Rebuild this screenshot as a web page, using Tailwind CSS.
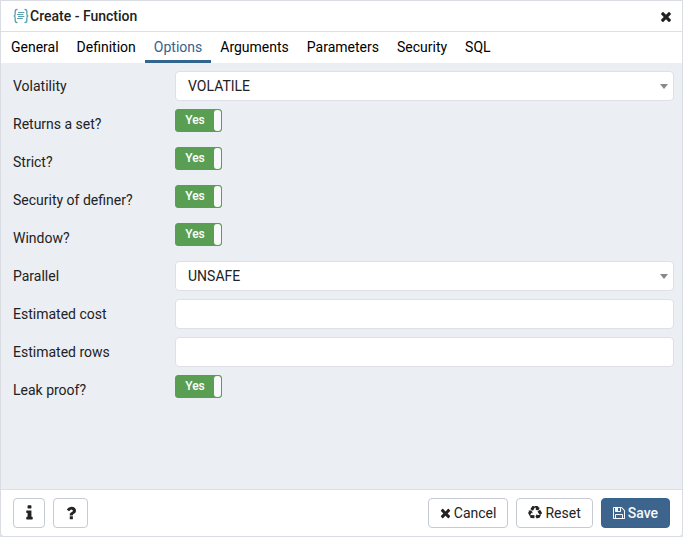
<!DOCTYPE html>
<html lang="en">
<head>
<meta charset="utf-8">
<meta name="viewport" content="width=device-width, initial-scale=1">
<title>Create - Function</title>
<script src="https://cdn.jsdelivr.net/npm/@tailwindcss/browser@4"></script>
</head>
<body class="bg-[#dde0e6] font-[Roboto,sans-serif] text-sm text-[#222]">
<svg class="hidden" aria-hidden="true">
  <symbol id="times" viewBox="0 0 1408 1792"><path fill="currentColor" transform="matrix(1 0 0 -1 0 1536)" d="M1298 214q0 -40 -28 -68l-136 -136q-28 -28 -68 -28t-68 28l-294 294l-294 -294q-28 -28 -68 -28t-68 28l-136 136q-28 28 -28 68t28 68l294 294l-294 294q-28 28 -28 68t28 68l136 136q28 28 68 28t68 -28l294 -294l294 294q28 28 68 28t68 -28l136 -136q28 -28 28 -68t-28 -68l-294 -294l294 -294q28 -28 28 -68z"/></symbol>
</svg>
<main class="flex min-h-screen flex-col rounded-b border border-[#d9dce3] bg-white">
  <header class="flex h-[31px] items-center justify-between border-b border-[#dddfe5] pl-3 pr-2">
    <h1 class="flex items-center gap-px font-medium">
      <svg class="h-4 w-4" viewBox="0 0 16 16" fill="none" stroke="#5b9fae" stroke-width="1.3" stroke-linecap="round" aria-hidden="true">
        <path d="M4 1.500C2.600 1.500 2.200 2.200 2.200 3.500V6C2.200 7.200 1.700 8 .7 8C1.700 8 2.200 8.800 2.200 10V12.500C2.200 13.800 2.600 14.500 4 14.500M12 1.500C13.400 1.500 13.800 2.200 13.800 3.500V6C13.800 7.200 14.300 8 15.300 8C14.300 8 13.800 8.800 13.800 10V12.500C13.800 13.800 13.400 14.500 12 14.500"/>
        <path stroke-width="1" d="M5.500 4.500H11M4.500 6.500H10M5.500 8.500H11M4.500 10.500H9.500"/>
      </svg>
      Create - Function
    </h1>
    <button type="button" aria-label="Close" class="flex h-6 w-4 items-center justify-center"><svg class="h-[15px] w-3" aria-hidden="true"><use href="#times"/></svg></button>
  </header>
  <nav class="flex h-[31px] items-stretch pl-px text-black" aria-label="Sections">
    <a href="#" class="border-b-3 border-transparent px-[9px] pt-[5px]">General</a>
    <a href="#" class="border-b-3 border-transparent px-[9px] pt-[5px]">Definition</a>
    <a href="#" aria-current="page" class="border-b-3 border-[#326690] px-[9px] pt-[5px] text-[#38618c]">Options</a>
    <a href="#" class="border-b-3 border-transparent px-[9px] pt-[5px]">Arguments</a>
    <a href="#" class="border-b-3 border-transparent px-[9px] pt-[5px]">Parameters</a>
    <a href="#" class="border-b-3 border-transparent px-[9px] pt-[5px]">Security</a>
    <a href="#" class="border-b-3 border-transparent px-[9px] pt-[5px]">SQL</a>
  </nav>
  <form id="options" class="grid flex-1 auto-rows-[30px] grid-cols-[162px_1fr] content-start gap-y-2 bg-[#ebeef3] py-2 pl-3 pr-2">
    <label for="volatility" class="self-center">Volatility</label>
    <div class="relative">
      <select id="volatility" class="h-full w-full appearance-none rounded border border-[#dde0e6] bg-white px-3"><option>VOLATILE</option><option>STABLE</option><option>IMMUTABLE</option></select>
      <span class="pointer-events-none absolute right-[6px] top-[13px] border-x-4 border-t-5 border-x-transparent border-t-[#888]"></span>
    </div>

    <label for="returns" class="self-center">Returns a set?</label>
    <label class="flex h-[23px] w-[47px] cursor-pointer rounded-[3px] border border-[#5a9e54] bg-[#5a9e54] font-medium text-white">
      <input id="returns" type="checkbox" checked class="sr-only"><span class="flex-1 text-center text-xs leading-[21px]">Yes</span><span class="w-[7px] rounded-[3px] bg-[#f8f9fa]"></span>
    </label>

    <label for="strict" class="self-center">Strict?</label>
    <label class="flex h-[23px] w-[47px] cursor-pointer rounded-[3px] border border-[#5a9e54] bg-[#5a9e54] font-medium text-white">
      <input id="strict" type="checkbox" checked class="sr-only"><span class="flex-1 text-center text-xs leading-[21px]">Yes</span><span class="w-[7px] rounded-[3px] bg-[#f8f9fa]"></span>
    </label>

    <label for="definer" class="self-center">Security of definer?</label>
    <label class="flex h-[23px] w-[47px] cursor-pointer rounded-[3px] border border-[#5a9e54] bg-[#5a9e54] font-medium text-white">
      <input id="definer" type="checkbox" checked class="sr-only"><span class="flex-1 text-center text-xs leading-[21px]">Yes</span><span class="w-[7px] rounded-[3px] bg-[#f8f9fa]"></span>
    </label>

    <label for="window" class="self-center">Window?</label>
    <label class="flex h-[23px] w-[47px] cursor-pointer rounded-[3px] border border-[#5a9e54] bg-[#5a9e54] font-medium text-white">
      <input id="window" type="checkbox" checked class="sr-only"><span class="flex-1 text-center text-xs leading-[21px]">Yes</span><span class="w-[7px] rounded-[3px] bg-[#f8f9fa]"></span>
    </label>

    <label for="parallel" class="self-center">Parallel</label>
    <div class="relative">
      <select id="parallel" class="h-full w-full appearance-none rounded border border-[#dde0e6] bg-white px-3"><option>UNSAFE</option><option>RESTRICTED</option><option>SAFE</option></select>
      <span class="pointer-events-none absolute right-[6px] top-[13px] border-x-4 border-t-5 border-x-transparent border-t-[#888]"></span>
    </div>

    <label for="cost" class="self-center">Estimated cost</label>
    <input id="cost" type="text" class="rounded border border-[#dde0e6] bg-white px-3">

    <label for="rows" class="self-center">Estimated rows</label>
    <input id="rows" type="text" class="rounded border border-[#dde0e6] bg-white px-3">

    <label for="leak" class="self-center">Leak proof?</label>
    <label class="flex h-[23px] w-[47px] cursor-pointer rounded-[3px] border border-[#5a9e54] bg-[#5a9e54] font-medium text-white">
      <input id="leak" type="checkbox" checked class="sr-only"><span class="flex-1 text-center text-xs leading-[21px]">Yes</span><span class="w-[7px] rounded-[3px] bg-[#f8f9fa]"></span>
    </label>
  </form>
  <footer class="flex gap-2 border-t border-[#dddfe5] px-3 py-2">
    <button type="button" aria-label="Information" class="flex h-[30px] w-8 items-center justify-center rounded border border-[#c5cad5]">
      <svg class="h-[18px] w-[7px]" viewBox="0 0 640 1792" aria-hidden="true"><path fill="currentColor" transform="matrix(1 0 0 -1 0 1536)" d="M640 192v-128q0 -26 -19 -45t-45 -19h-512q-26 0 -45 19t-19 45v128q0 26 19 45t45 19h64v384h-64q-26 0 -45 19t-19 45v128q0 26 19 45t45 19h384q26 0 45 -19t19 -45v-576h64q26 0 45 -19t19 -45zM512 1344v-192q0 -26 -19 -45t-45 -19h-256q-26 0 -45 19t-19 45v192q0 26 19 45t45 19h256q26 0 45 -19t19 -45z"/></svg>
    </button>
    <button type="button" aria-label="Help" class="flex h-[30px] w-[35px] items-center justify-center rounded border border-[#c5cad5]">
      <svg class="h-[18px] w-[10px]" viewBox="0 0 1024 1792" aria-hidden="true"><path fill="currentColor" transform="matrix(1 0 0 -1 0 1536)" d="M704 280v-240q0 -16 -12 -28t-28 -12h-240q-16 0 -28 12t-12 28v240q0 16 12 28t28 12h240q16 0 28 -12t12 -28zM1020 880q0 -54 -15.500 -101t-35 -76.500t-55 -59.500t-57.500 -43.500t-61 -35.500q-41 -23 -68.500 -65t-27.500 -67q0 -17 -12 -32.500t-28 -15.500h-240q-15 0 -25.500 18.500t-10.500 37.500v45q0 83 65 156.500t143 108.500q59 27 84 56t25 76q0 42 -46.500 74t-107.500 32q-65 0 -108 -29q-35 -25 -107 -115q-13 -16 -31 -16q-12 0 -25 8l-164 125q-13 10 -15.500 25t5.500 28q160 266 464 266q80 0 161 -31t146 -83t106 -127.500t41 -158.500z"/></svg>
    </button>
    <button type="button" class="ml-auto flex h-[30px] items-center gap-[3px] rounded border border-[#c5cad5] px-[11px]"><svg class="h-[14px] w-[11px]" aria-hidden="true"><use href="#times"/></svg>Cancel</button>
    <button type="button" class="flex h-[30px] items-center gap-[3px] rounded border border-[#c5cad5] px-[11px]"><svg class="h-[14px] w-[14px]" viewBox="0 0 1792 1792" aria-hidden="true"><path fill="currentColor" transform="matrix(1 0 0 -1 0 1536)" d="M836 367l-15 -368l-2 -22l-420 29q-36 3 -67 31.500t-47 65.500q-11 27 -14.500 55t4 65t12 55t21.500 64t19 53q78 -12 509 -28zM449 953l180 -379l-147 92q-63 -72 -111.500 -144.500t-72.500 -125t-39.500 -94.500t-18.500 -63l-4 -21l-190 357q-17 26 -18 56t6 47l8 18q35 63 114 188l-140 86zM1680 436l-188 -359q-12 -29 -36.500 -46.500t-43.500 -20.500l-18 -4q-71 -7 -219 -12l8 -164l-230 367l211 362l7 -173q170 -16 283 -5t170 33zM895 1360q-47 -63 -265 -435l-317 187l-19 12l225 356q20 31 60 45t80 10q24 -2 48.500 -12t42 -21t41.500 -33t36 -34.500t36 -39.500t32 -35zM1550 1053l212 -363q18 -37 12.500 -76t-27.500 -74q-13 -20 -33 -37t-38 -28t-48.500 -22t-47 -16t-51.500 -14t-46 -12q-34 72 -265 436l313 195zM1407 1279l142 83l-220 -373l-419 20l151 86q-34 89 -75 166t-75.500 123.500t-64.500 80t-47 46.500l-17 13l405 -1q31 3 58 -10.500t39 -28.500l11 -15q39 -61 112 -190z"/></svg>Reset</button>
    <button type="submit" form="options" class="flex h-[30px] items-center gap-[3px] rounded border border-[#326690] bg-[#3c648c] px-[11px] font-medium text-[#f5f8fb]"><svg class="h-[14px] w-3" viewBox="0 0 1536 1792" aria-hidden="true"><path fill="currentColor" transform="matrix(1 0 0 -1 0 1536)" d="M384 0h768v384h-768v-384zM1280 0h128v896q0 14 -10 38.500t-20 34.500l-281 281q-10 10 -34 20t-39 10v-416q0 -40 -28 -68t-68 -28h-576q-40 0 -68 28t-28 68v416h-128v-1280h128v416q0 40 28 68t68 28h832q40 0 68 -28t28 -68v-416zM896 928v320q0 13 -9.500 22.500t-22.500 9.500h-192q-13 0 -22.500 -9.500t-9.500 -22.500v-320q0 -13 9.500 -22.500t22.500 -9.500h192q13 0 22.500 9.500t9.500 22.500zM1536 896v-928q0 -40 -28 -68t-68 -28h-1344q-40 0 -68 28t-28 68v1344q0 40 28 68t68 28h928q40 0 88 -20t76 -48l280 -280q28 -28 48 -76t20 -88z"/></svg>Save</button>
  </footer>
</main>
</body>
</html>
